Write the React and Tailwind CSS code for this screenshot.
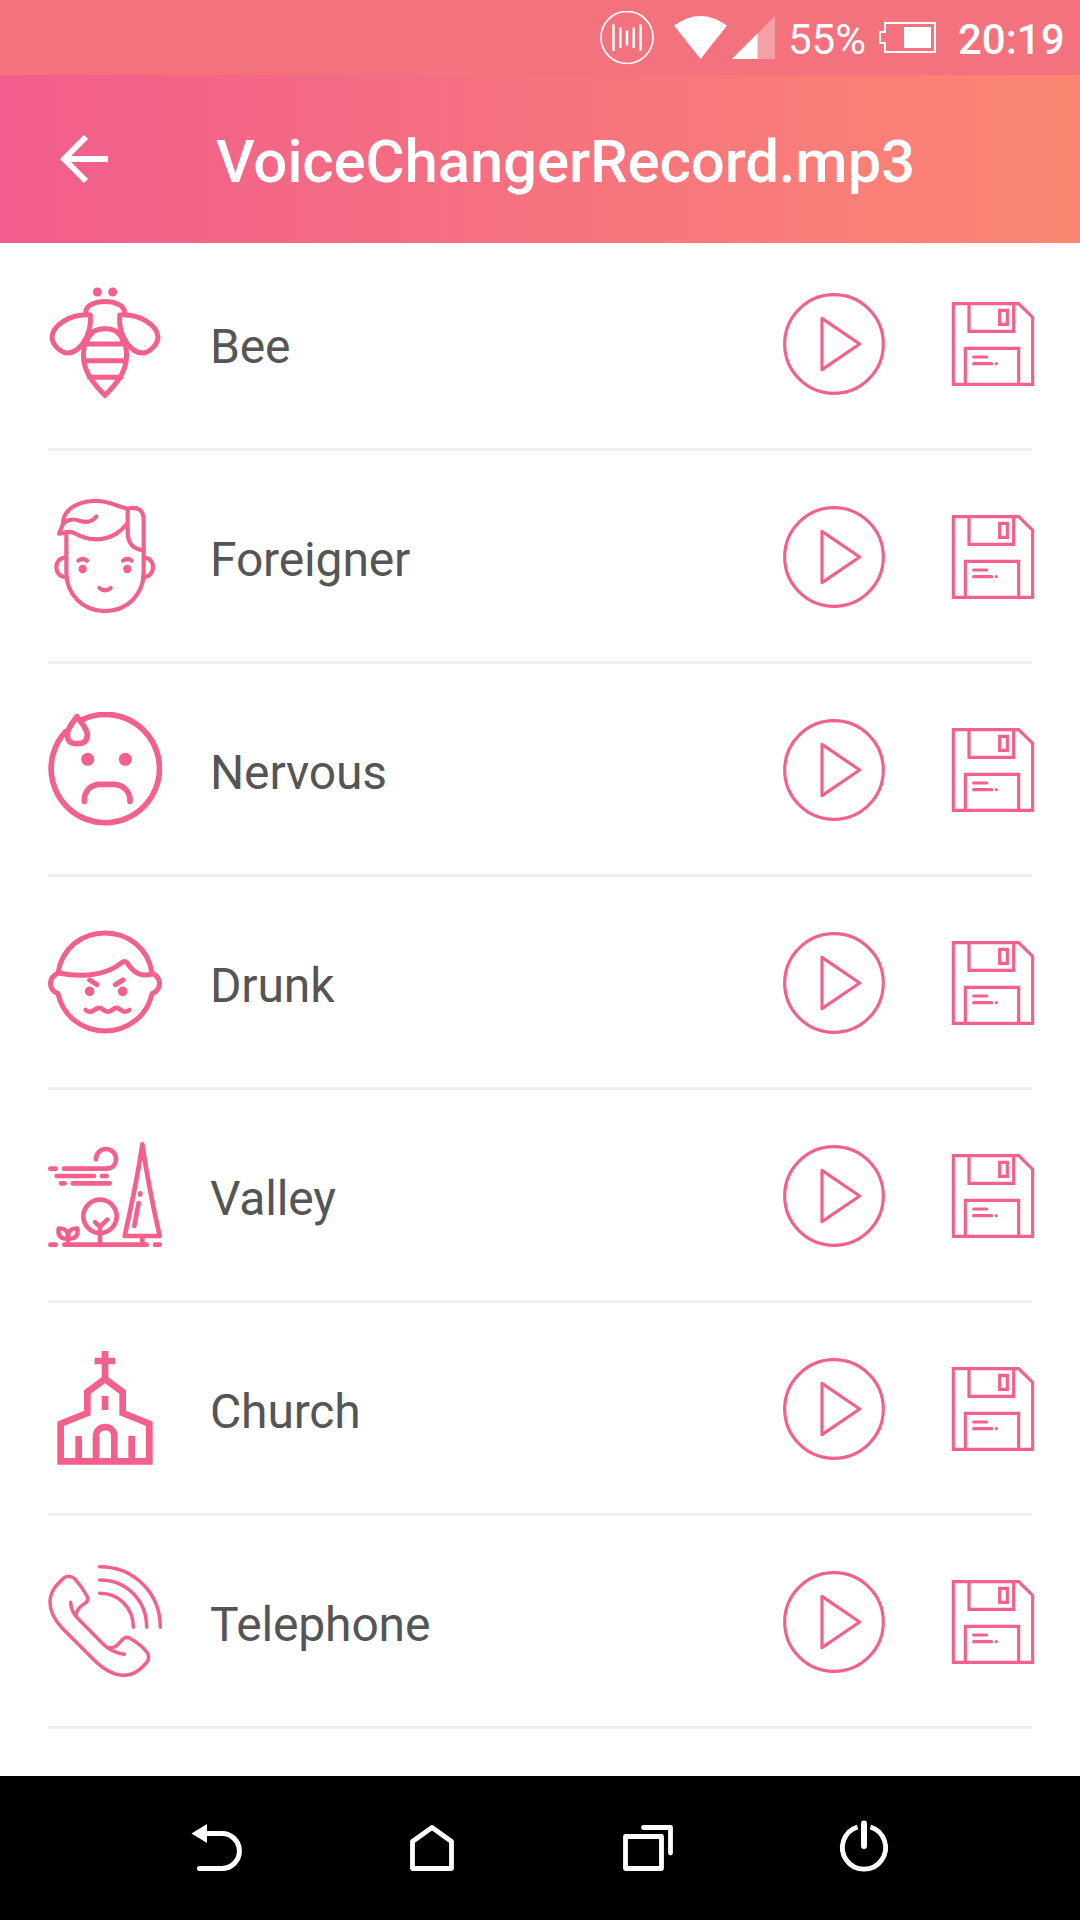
const PINK = '#f2608b';

function RowIcon({ viewBox, width, children }) {
  return (
    <svg className="h-[114px] w-[114px] shrink-0 self-start" viewBox={viewBox} fill="none" stroke={PINK} strokeWidth={width} strokeLinecap="round" strokeLinejoin="round">
      {children}
    </svg>
  );
}

function Bee() {
  return (
    <RowIcon viewBox="54 48 342 342" width={15}>
      <g fill={PINK} stroke="none">
        <circle cx="202" cy="66" r="13.5" />
        <circle cx="248" cy="66" r="13.5" />
      </g>
      <path d="M167 127C168 84 282 84 284 127" />
      <path d="M181 135C120 130 67 167 66 203C68 226 94 249 112 249C145 249 186 203 181 135Z" />
      <path d="M269 135C330 130 383 167 384 203C382 226 356 249 338 249C305 249 264 203 269 135Z" />
      <path d="M182 190C206 172 244 172 268 190M168 211C150 265 160 313 225 376C290 313 300 265 282 211" />
      <path d="M172 211Q176 197 186 189M278 211Q274 197 264 189" />
      <path d="M168 222H282M163 272H287M178 322H272" />
    </RowIcon>
  );
}

function Foreigner() {
  return (
    <RowIcon viewBox="54 57 342 342" width={12.5}>
      <path d="M109 157V277C109 345 160 393 225 393C290 393 341 345 341 277V211" />
      <path d="M99 130C100 85 148 63 198 63C241 63 262 80 293 86C326 78 341 93 341 120V211C310 208 294 190 293 159V88" />
      <path d="M199 109C187 126 171 129 151 123C126 113 105 121 98 134L87 161C99 163 108 148 132 159C188 190 250 184 290 132" />
      <path d="M107 233C69 233 69 291 109 292M341 233C379 233 379 291 339 292" />
      <path d="M145 242Q158 232 171 242M279 242Q292 232 305 242M208 324Q225 338 242 324" />
      <g fill={PINK} stroke="none">
        <circle cx="158" cy="267" r="12.5" />
        <circle cx="292" cy="267" r="12.5" />
      </g>
    </RowIcon>
  );
}

function Nervous() {
  return (
    <RowIcon viewBox="54 36 342 342" width={17}>
      <path d="M107 95A162.500 162.500 0 1 0 154 60" />
      <path d="M141 50C130 65 113 84 112 103C112 121 118 131 142 131C165 131 172 121 172 103C170 83 153 67 141 50Z" />
      <path d="M163 304C162 276 179 253 212 253H249C282 253 301 276 300 304" />
      <g fill={PINK} stroke="none">
        <circle cx="173" cy="178" r="19.5" />
        <circle cx="286" cy="178" r="19.5" />
      </g>
    </RowIcon>
  );
}

function Drunk() {
  return (
    <RowIcon viewBox="54 30 342 342" width={15}>
      <path d="M84 174C95 100 155 54 225 54C295 54 355 100 366 174C399 191 393 226 366 236C351 304 292 348 225 348C158 348 99 304 84 236C57 226 51 191 84 174Z" />
      <path d="M84 174C156 187 224 185 275 143Q284 136 291 143C312 176 333 186 366 177" />
      <path d="M179 195L201 209M279 195L256 209" />
      <path d="M167 285C176 292 182 293 191 286C207 276 209 276 223 286C231 292 235 292 244 286C257 276 262 276 274 286C284 293 290 291 298 285" strokeWidth="14" />
      <g fill={PINK} stroke="none">
        <circle cx="179" cy="229" r="14.5" />
        <circle cx="278" cy="229" r="14.5" />
      </g>
    </RowIcon>
  );
}

function Valley() {
  return (
    <RowIcon viewBox="54 24 342 342" width={14}>
      <path d="M61 116H77M102 116H229C249 116 258 102 258 88C258 70 245 57 228 57C211 57 198 70 198 88M80 138H192M216 138H230M93 160H104M128 160H239" />
      <path d="M337 43C326 120 306 220 284 318H389C367 220 348 120 337 43ZM337 322V340M326 219L313 288M331 190L330 194" />
      <circle cx="210" cy="259" r="50" />
      <path d="M210 340V292M195 277L210 290L232 269" />
      <path d="M114 338V325C92 330 82 315 86 295C104 294 114 302 114 325C114 302 124 294 142 295C146 315 136 330 114 325" strokeWidth="13" />
      <path d="M61 344H77M103 344H350M375 344H389" />
    </RowIcon>
  );
}

function Church() {
  return (
    <RowIcon viewBox="54 33 342 342" width={20}>
      <g strokeLinecap="butt" strokeLinejoin="miter">
        <path d="M225 33V118M194 63H255M225 168V210M146 288V364M305 288V364" />
        <path d="M92 364V251L172 219V156L225 117L278 156V219L358 251V364Z" />
        <path d="M198 364V289C198 252 253 252 253 289V364" />
      </g>
    </RowIcon>
  );
}

function Telephone() {
  return (
    <RowIcon viewBox="54 42 342 342" width={10.5}>
      <path d="M209 50C315 50 391 132 391 232M209 90C291 90 350 152 350 232M209 130C267 130 310 173 310 232" />
      <path d="M122 157C122 175 129 191 145 207L220 283C236 299 253 309 283 313" />
      <path d="M138 196C141 174 152 170 170 156Q176 149 171 138C160 118 148 102 134 86Q115 72 100 85C77 106 60 126 60 157C60 190 78 216 99 237L190 328C220 358 248 376 281 376C313 376 333 357 351 336Q359 325 353 310C339 290 319 276 300 265Q288 258 278 268C264 284 256 296 234 293" />
    </RowIcon>
  );
}

function PlayIcon() {
  return (
    <svg className="h-[102px] w-[102px]" viewBox="69 69 306 306" fill="none" stroke={PINK} strokeWidth="9.5" strokeLinejoin="round">
      <circle cx="222" cy="222" r="148" />
      <path d="M186 145V299L299 222Z" />
    </svg>
  );
}

function SaveIcon() {
  return (
    <svg className="h-[86px] w-[84px]" viewBox="573 93 252 258" fill="none" stroke={PINK} strokeWidth="9.5">
      <path d="M580 101H776L818 142V343H580Z" />
      <path d="M627 101V184H761V101M616 343V235H776V343M719 121H742V163H719Z" />
      <path d="M641 261H680M641 281H695M709 281h.1" strokeLinecap="round" />
    </svg>
  );
}

const voices = [
  ['Bee', Bee],
  ['Foreigner', Foreigner],
  ['Nervous', Nervous],
  ['Drunk', Drunk],
  ['Valley', Valley],
  ['Church', Church],
  ['Telephone', Telephone],
];

function StatusBar() {
  return (
    <div className="flex h-[75px] items-center bg-[#f4727d] pl-[600px] text-[42px] leading-[60px] text-white">
      <svg className="h-[54px] w-[54px] shrink-0" viewBox="0 0 54 54" fill="none" stroke="white">
        <circle cx="27" cy="26.500" r="26" strokeWidth="1.7" />
        <path d="M13.500 13.500v26.500M20.300 16.500v20.500M27 19.500v15M33.700 16.500v20.500M40.500 13.500v26.500" strokeWidth="2.5" />
      </svg>
      <svg className="ml-5 h-[43px] w-[53px] shrink-0" viewBox="0 0 53 43" fill="white">
        <path d="M0 9.5Q26.500-9.500 53 9.500L26.500 43Z" />
      </svg>
      <svg className="ml-[5px] h-[43px] w-[43px] shrink-0" viewBox="0 0 43 43" fill="white">
        <path d="M43 0V43H0Z" opacity=".32" />
        <path d="M25.500 17.500V43H0Z" />
      </svg>
      <span className="ml-[13px] w-[78px] shrink-0 pt-[4px]">55%</span>
      <svg className="ml-[13px] h-[31px] w-[57px] shrink-0" viewBox="0 0 57 31" fill="none" stroke="white" strokeWidth="2">
        <path d="M6 1H56V30H6V21H1V10H6Z" />
        <path d="M25 5H52V26H25Z" fill="white" stroke="none" />
      </svg>
      <span className="ml-[22px] pt-[4px] font-medium">20:19</span>
    </div>
  );
}

function NavBar() {
  return (
    <div className="flex h-36 items-center justify-between bg-black px-[186px]">
      <svg className="h-[60px] w-[60px]" viewBox="186 1818 60 60" fill="none" stroke="white" strokeWidth="5" strokeLinecap="round">
        <path d="M204 1833.500H221.900A17.500 17.500 0 0 1 221.900 1868.500H199.500" />
        <path d="M191.500 1833.500L207 1824V1843Z" fill="white" stroke="none" />
      </svg>
      <svg className="h-[60px] w-[60px]" viewBox="402 1818 60 60" fill="none" stroke="white" strokeWidth="4.800" strokeLinejoin="round">
        <path d="M412.500 1868.500V1841.500L432 1827.500L451.500 1841.500V1868.500Z" />
      </svg>
      <svg className="h-[60px] w-[60px]" viewBox="618 1818 60 60" fill="none" stroke="white" strokeWidth="4.800" strokeLinecap="round" strokeLinejoin="round">
        <path d="M625.500 1836.500H661.500V1868.500H625.500Z" />
        <path d="M643.500 1827.500H670.500V1853" />
      </svg>
      <svg className="h-[60px] w-[60px]" viewBox="834 1818 60 60" fill="none" stroke="white" strokeWidth="4.800">
        <path d="M857.500 1827A21.600 21.600 0 1 0 870.500 1827" />
        <path d="M864 1823.500V1846" strokeWidth="6" strokeLinecap="round" />
      </svg>
    </div>
  );
}

export default function App() {
  return (
    <div className="flex h-[1920px] w-[1080px] flex-col overflow-hidden bg-white font-['Roboto',sans-serif]">
      <StatusBar />
      <header className="flex h-[168px] items-center bg-linear-to-r/srgb from-[#f15d8c] to-[#fb8772] pl-[60px] text-white">
        <svg className="h-12 w-12 shrink-0" viewBox="0 0 48 48" fill="none" stroke="white" strokeWidth="5.800">
          <path d="M26 2L4 24L26 46M4 24H48" />
        </svg>
        <h1 className="ml-[108px] pt-[5px] text-[60px] leading-none font-medium tracking-[-0.15px]">VoiceChangerRecord.mp3</h1>
      </header>
      <main className="-mt-[5px] flex-1 pr-12 pl-12">
        {voices.map(([name, Icon]) => (
          <div key={name} className="h-[213px] border-b-3 border-[#eeeeee] pt-12">
            <div className="-mr-[3px] flex h-[116px] items-center">
              <Icon />
              <span className="ml-12 flex-1 pt-[5px] text-[48px] leading-[56px] tracking-[-0.15px] text-[#555555]">{name}</span>
              <PlayIcon />
              <div className="ml-[66px]">
                <SaveIcon />
              </div>
            </div>
          </div>
        ))}
      </main>
      <NavBar />
    </div>
  );
}
